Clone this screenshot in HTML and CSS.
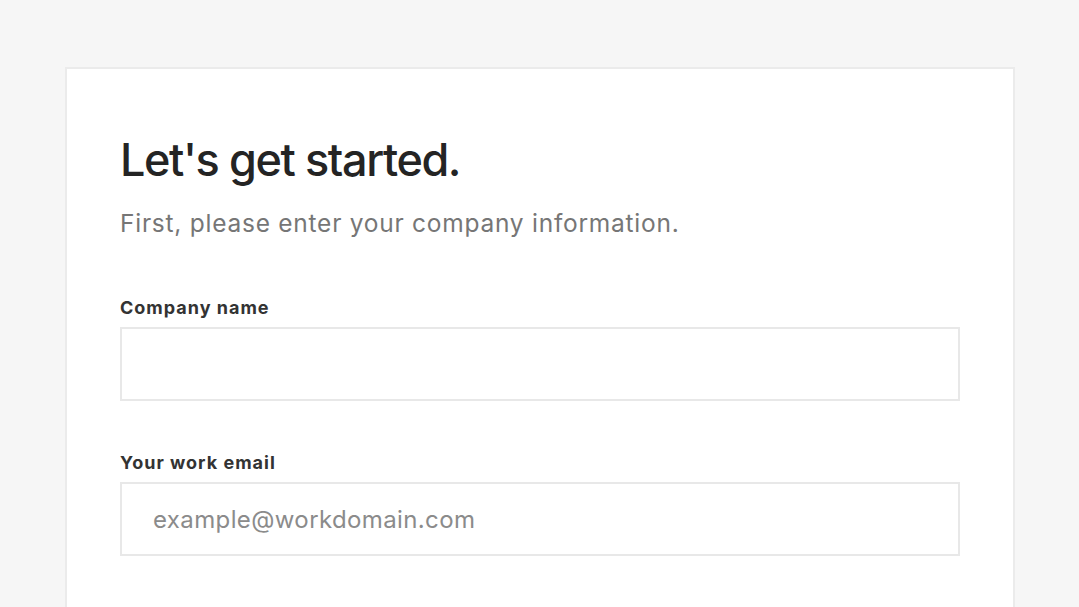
FILE: index.html
```html
<!DOCTYPE html>
<html lang="en">
<head>
<meta charset="utf-8">
<title>Let's get started</title>
<link rel="stylesheet" href="styles.css">
</head>
<body>
  <main class="page">
    <section class="card">
      <h1 class="title">Let's get started.</h1>
      <p class="subtitle">First, please enter your company information.</p>
      <form class="form">
        <div class="field">
          <label class="label" for="company">Company name</label>
          <input class="input" id="company" type="text">
        </div>
        <div class="field">
          <label class="label" for="email">Your work email</label>
          <input class="input" id="email" type="email" placeholder="example@workdomain.com">
        </div>
      </form>
    </section>
  </main>
</body>
</html>
```
FILE: styles.css
```css
html, body {
  margin: 0;
  padding: 0;
  background: #f6f6f6;
  overflow: hidden;
}
body {
  font-family: Inter, "Liberation Sans", sans-serif;
  color: #222;
}
.page {
  padding: 67px 0 0 65px;
}
.card {
  box-sizing: border-box;
  width: 950px;
  min-height: 700px;
  background: #fff;
  border: 2px solid #ebebeb;
  padding: 65px 53px 0 53px;
}
.title {
  margin: 0;
  font-size: 45px;
  line-height: 52px;
  font-weight: 500;
  letter-spacing: -1.4px;
  color: #242424;
}
.subtitle {
  margin: 21px 0 0 0;
  font-size: 24.5px;
  line-height: 32px;
  font-weight: 400;
  letter-spacing: 0.75px;
  color: #767676;
}
.form {
  margin-top: 57px;
  display: flex;
  flex-direction: column;
  gap: 50px;
}
.field {
  display: flex;
  flex-direction: column;
  gap: 7px;
}
.label {
  font-size: 18px;
  line-height: 24px;
  font-weight: 700;
  letter-spacing: 1px;
  color: #333;
}
.input {
  box-sizing: border-box;
  width: 840px;
  height: 74px;
  border: 2px solid #e8e8e8;
  border-radius: 0;
  background: #fff;
  padding: 0 0 0 31px;
  font-family: Inter, "Liberation Sans", sans-serif;
  font-size: 24px;
  letter-spacing: 0.38px;
  color: #222;
  outline: none;
}
.input::placeholder {
  color: #8b8b8b;
}
```
